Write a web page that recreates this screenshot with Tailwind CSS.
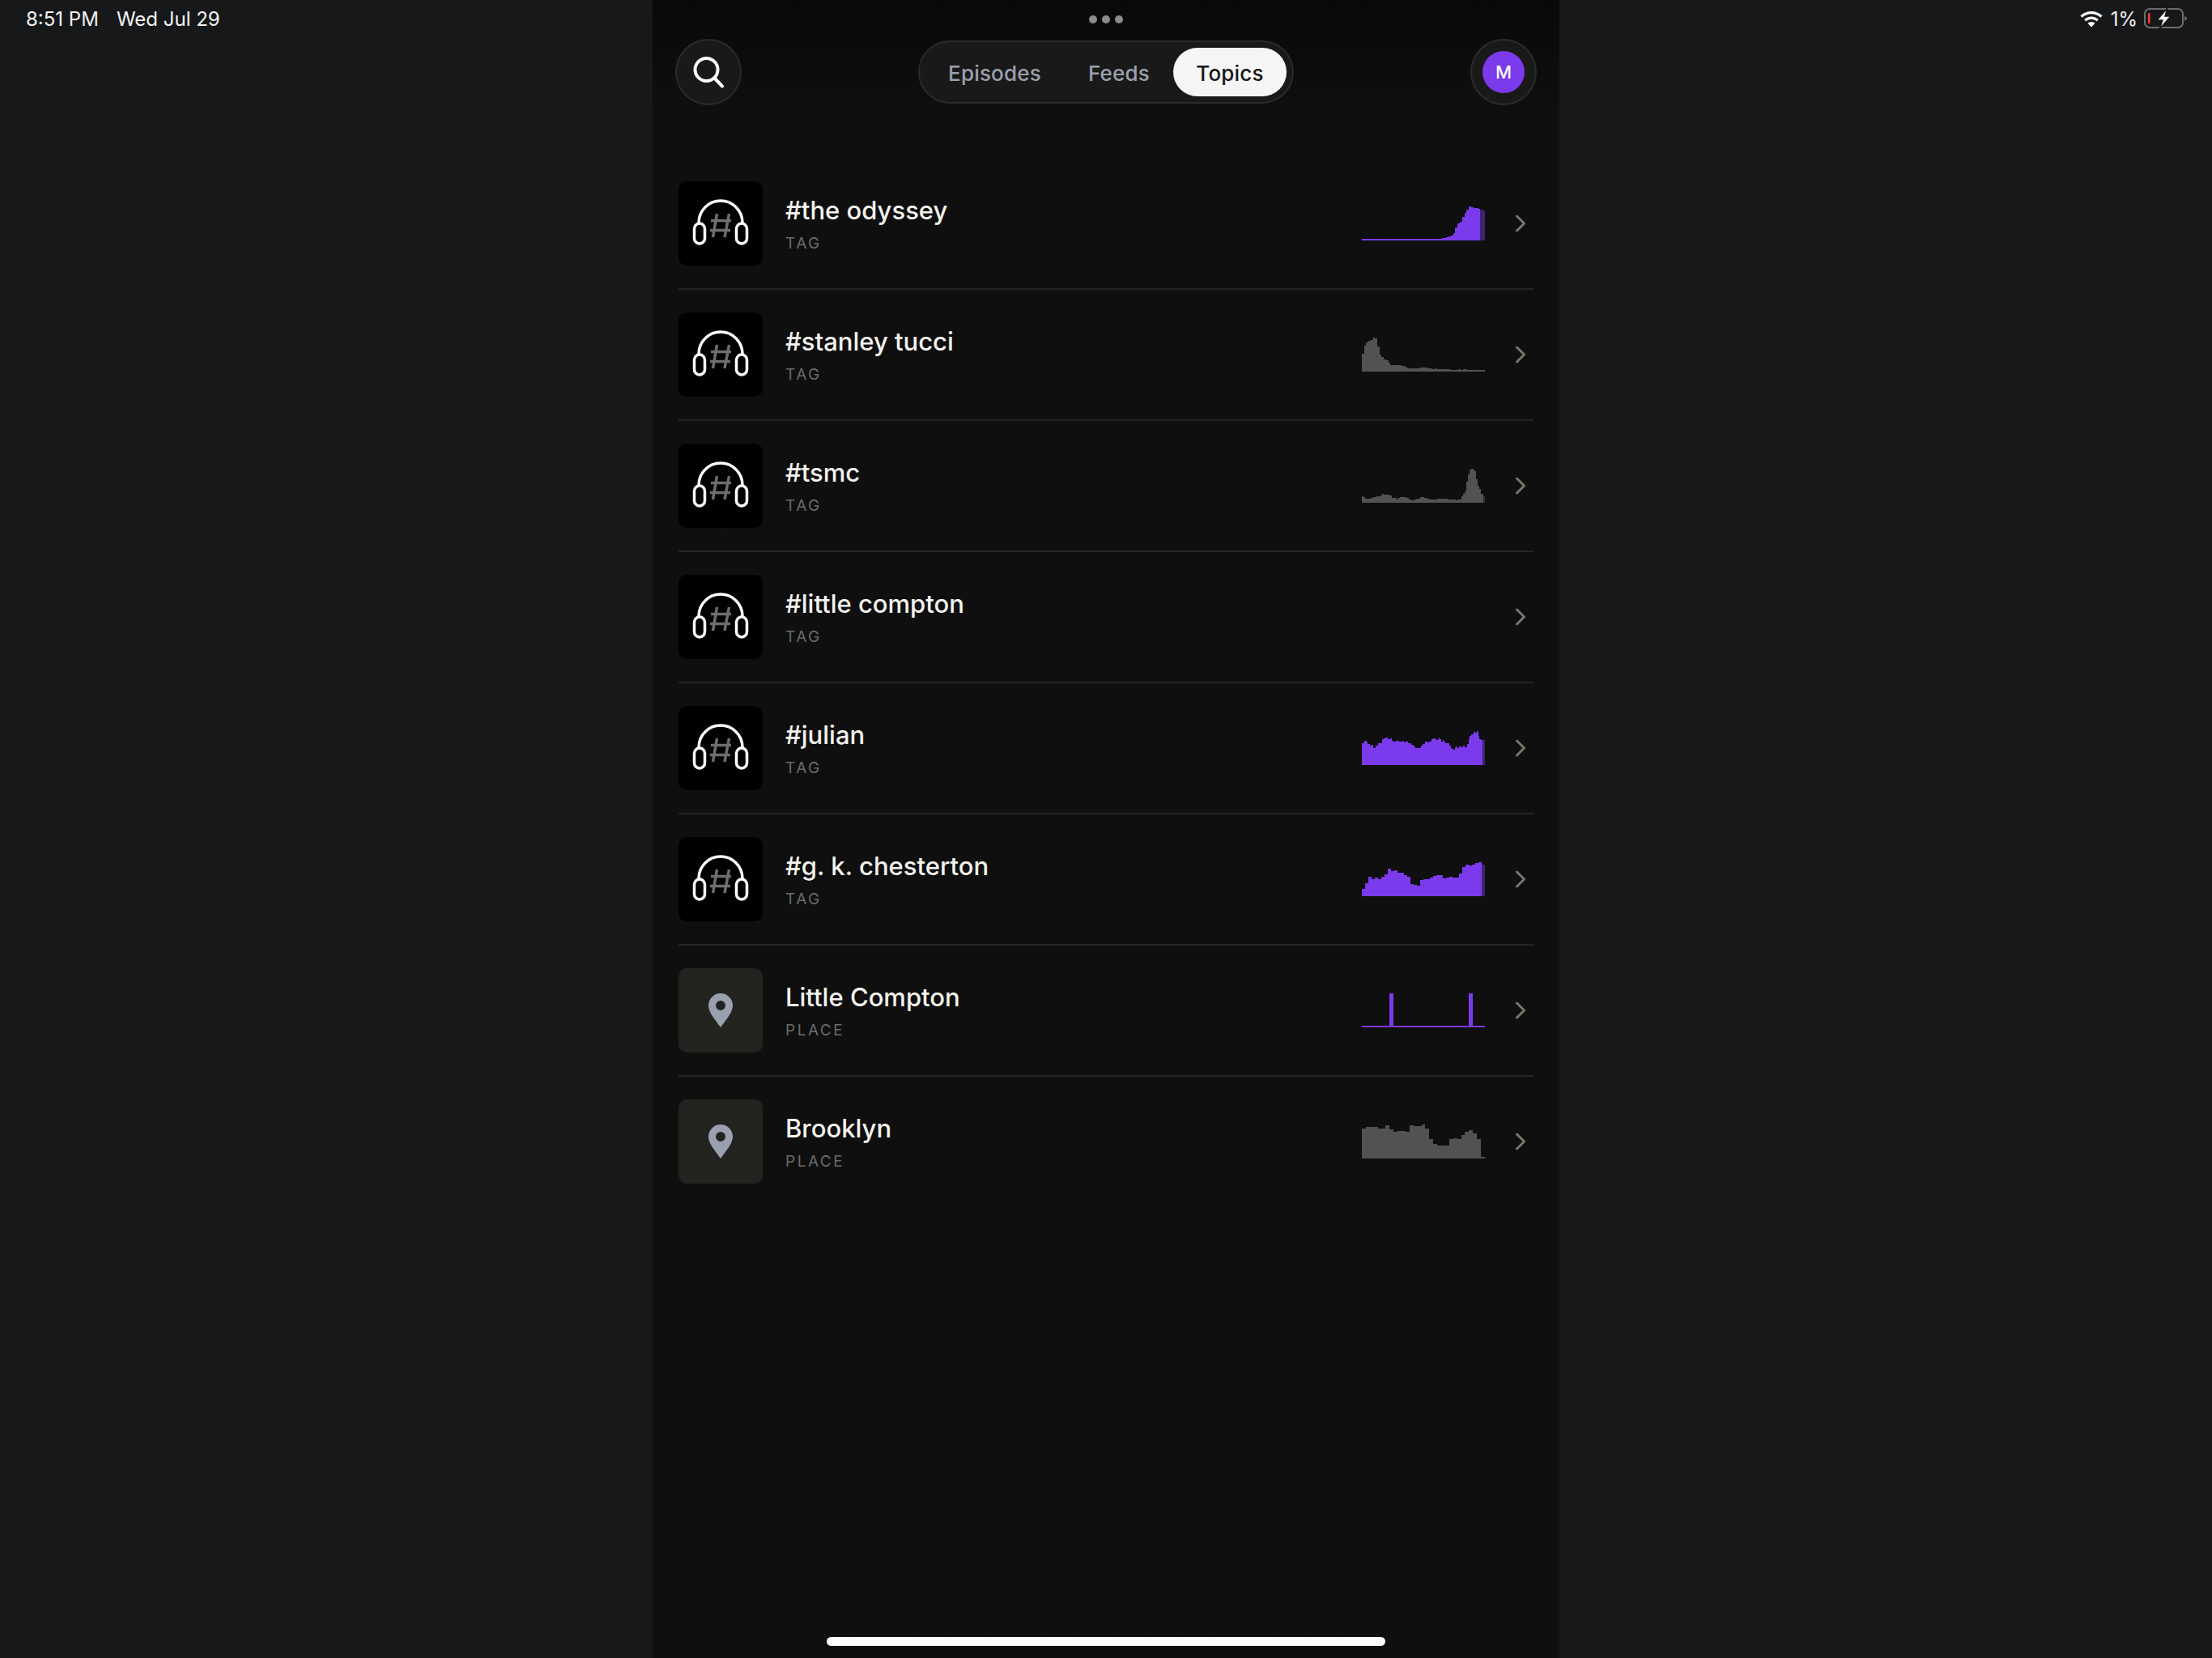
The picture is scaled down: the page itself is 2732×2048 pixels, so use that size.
<!doctype html>
<html lang="en">
	<head>
		<meta charset="UTF-8">
		<title>Topics</title>
		<script src="https://cdn.jsdelivr.net/npm/@tailwindcss/browser@4"></script>
	</head>
	<body class="bg-[#16181a] font-['Inter',sans-serif] overflow-hidden">
		<div class="flex h-[2048px] w-[2732px]">
			<!-- left side: clock -->
			<div class="w-[806px] pl-[32px] pt-[9px] text-[24px] leading-[29px] text-[#f2f2f2] flex gap-[22px]">
				<span>8:51 PM</span>
				<span>Wed Jul 29</span>
			</div>

			<!-- middle column -->
			<div class="w-[1120px] relative bg-[#0e0f0e] bg-gradient-to-b from-[#090909] to-[#0e0f0e] to-[140px] flex flex-col">
				<div class="flex justify-center gap-[6px] pt-[19px]">
					<div class="size-[10px] rounded-full bg-[#8c8c8c]"></div>
					<div class="size-[10px] rounded-full bg-[#8c8c8c]"></div>
					<div class="size-[10px] rounded-full bg-[#8c8c8c]"></div>
				</div>

				<!-- header -->
				<div class="flex justify-between items-center px-[28px] mt-[19px]">
					<div class="size-[82px] rounded-full bg-[#191919] border-2 border-[#2b2b2b] flex items-center justify-center">
						<svg class="size-[82px] shrink-0" viewBox="0 0 82 82" fill="none" stroke="#fff" stroke-width="4" stroke-linecap="round">
							<circle cx="38.500" cy="38" r="14"/>
							<path d="M48.500 48.500l9.500 10"/>
						</svg>
					</div>
					<div class="h-[78px] w-[464px] rounded-full bg-[#191919] border-2 border-[#2b2b2b] flex items-center justify-end pr-[7px] text-[26px] tracking-[0.2px] font-medium">
						<span class="text-[#9ca0ad] mr-[58px] pt-[2px]">Episodes</span>
						<span class="text-[#9ca0ad] mr-[29px] pt-[2px]">Feeds</span>
						<span class="w-[140px] h-[60px] pt-[2px] rounded-full bg-[#f5f5f5] text-[#161616] flex items-center justify-center">Topics</span>
					</div>
					<div class="size-[82px] rounded-full bg-[#191919] border-2 border-[#2b2b2b] flex items-center justify-center">
						<div class="size-[52px] rounded-full bg-[#7c3aed] text-white text-[22px] font-medium flex items-center justify-center">M</div>
					</div>
				</div>

				<!-- list -->
				<div class="px-[32px] mt-[66px]">

					<div class="flex items-center py-[28px] border-b-2 border-[#242422]">
						<div class="size-[104px] rounded-[10px] bg-black shrink-0">
							<svg class="size-[104px]" viewBox="0 0 104 104" fill="none" stroke-width="3.500" stroke-linecap="round">
								<path d="M25 51A27 27 0 0 1 79 51" stroke="#fff"/>
								<rect x="19.500" y="52" width="13" height="25" rx="6.500" stroke="#fff"/>
								<rect x="71.500" y="52" width="13" height="25" rx="6.500" stroke="#fff"/>
								<path d="M47.500 40L42.500 69M62.500 40L57 69M40 48.500H65M39 60.500H64" stroke="#6e6e6e" stroke-linecap="butt"/>
							</svg>
						</div>
						<div class="ml-[28px] flex-1">
							<div class="text-[31px] leading-[40px] font-[550] text-[#f5f3ee]">#the odyssey</div>
							<div class="text-[19px] leading-[24px] mt-[9px] tracking-[2.500px] text-[#6b6b6b]">TAG</div>
						</div>
						<svg class="w-[152px] h-[48px]" viewBox="66 96 456 144" shape-rendering="crispEdges">
							<path fill="#7c3aed" d="M66 231V225H363V222H378V219H387V216H396V213H405V204H411V183H420V168H429V162H438V144H447V129H453V117H462V105H471V108H480V111H498V114H504V231Z"/>
							<path fill="#3f2470" d="M504 231V117H513V120H522V231Z"/>
						</svg>
						<svg class="w-[14px] h-[24px] ml-[36px] mr-[10px]" viewBox="0 0 14 24" fill="none" stroke="#7b766b" stroke-width="3" stroke-linecap="round" stroke-linejoin="round"><path d="M3.500 3l9 9-9 9"/></svg>
					</div>

					<div class="flex items-center py-[28px] border-b-2 border-[#242422]">
						<div class="size-[104px] rounded-[10px] bg-black shrink-0">
							<svg class="size-[104px]" viewBox="0 0 104 104" fill="none" stroke-width="3.500" stroke-linecap="round">
								<path d="M25 51A27 27 0 0 1 79 51" stroke="#fff"/>
								<rect x="19.500" y="52" width="13" height="25" rx="6.500" stroke="#fff"/>
								<rect x="71.500" y="52" width="13" height="25" rx="6.500" stroke="#fff"/>
								<path d="M47.500 40L42.500 69M62.500 40L57 69M40 48.500H65M39 60.500H64" stroke="#6e6e6e" stroke-linecap="butt"/>
							</svg>
						</div>
						<div class="ml-[28px] flex-1">
							<div class="text-[31px] leading-[40px] font-[550] text-[#f5f3ee]">#stanley tucci</div>
							<div class="text-[19px] leading-[24px] mt-[9px] tracking-[2.500px] text-[#6b6b6b]">TAG</div>
						</div>
						<svg class="w-[152px] h-[48px]" viewBox="66 582 456 144" shape-rendering="crispEdges">
							<path fill="#525252" d="M66 717V651H75V621H81V609H90V603H99V600H108V591H114V594H123V624H132V654H138V663H147V672H156V675H165V684H171V693H213V696H228V702H237V705H279V702H309V705H327V708H336V705H342V708H393V711H423V708H432V711H441V708H456V711H522V717Z"/>
						</svg>
						<svg class="w-[14px] h-[24px] ml-[36px] mr-[10px]" viewBox="0 0 14 24" fill="none" stroke="#7b766b" stroke-width="3" stroke-linecap="round" stroke-linejoin="round"><path d="M3.500 3l9 9-9 9"/></svg>
					</div>

					<div class="flex items-center py-[28px] border-b-2 border-[#242422]">
						<div class="size-[104px] rounded-[10px] bg-black shrink-0">
							<svg class="size-[104px]" viewBox="0 0 104 104" fill="none" stroke-width="3.500" stroke-linecap="round">
								<path d="M25 51A27 27 0 0 1 79 51" stroke="#fff"/>
								<rect x="19.500" y="52" width="13" height="25" rx="6.500" stroke="#fff"/>
								<rect x="71.500" y="52" width="13" height="25" rx="6.500" stroke="#fff"/>
								<path d="M47.500 40L42.500 69M62.500 40L57 69M40 48.500H65M39 60.500H64" stroke="#6e6e6e" stroke-linecap="butt"/>
							</svg>
						</div>
						<div class="ml-[28px] flex-1">
							<div class="text-[31px] leading-[40px] font-[550] text-[#f5f3ee]">#tsmc</div>
							<div class="text-[19px] leading-[24px] mt-[9px] tracking-[2.500px] text-[#6b6b6b]">TAG</div>
						</div>
						<svg class="w-[152px] h-[48px]" viewBox="66 1068 456 144" shape-rendering="crispEdges">
							<path fill="#525252" d="M66 1203V1179H72V1182H78V1188H99V1185H108V1182H120V1179H135V1176H141V1170H147V1173H168V1176H177V1185H195V1191H201V1185H207V1182H231V1185H240V1191H249V1194H258V1191H270V1188H282V1182H297V1185H306V1188H318V1191H345V1188H387V1191H414V1194H420V1191H435V1179H441V1170H447V1161H453V1125H459V1098H465V1080H471V1077H477V1080H480V1077H483V1086H489V1116H495V1140H501V1152H507V1170H516V1203Z"/>
							<path fill="#2f2f2f" d="M516 1203V1179H522V1203Z"/>
						</svg>
						<svg class="w-[14px] h-[24px] ml-[36px] mr-[10px]" viewBox="0 0 14 24" fill="none" stroke="#7b766b" stroke-width="3" stroke-linecap="round" stroke-linejoin="round"><path d="M3.500 3l9 9-9 9"/></svg>
					</div>

					<div class="flex items-center py-[28px] border-b-2 border-[#242422]">
						<div class="size-[104px] rounded-[10px] bg-black shrink-0">
							<svg class="size-[104px]" viewBox="0 0 104 104" fill="none" stroke-width="3.500" stroke-linecap="round">
								<path d="M25 51A27 27 0 0 1 79 51" stroke="#fff"/>
								<rect x="19.500" y="52" width="13" height="25" rx="6.500" stroke="#fff"/>
								<rect x="71.500" y="52" width="13" height="25" rx="6.500" stroke="#fff"/>
								<path d="M47.500 40L42.500 69M62.500 40L57 69M40 48.500H65M39 60.500H64" stroke="#6e6e6e" stroke-linecap="butt"/>
							</svg>
						</div>
						<div class="ml-[28px] flex-1">
							<div class="text-[31px] leading-[40px] font-[550] text-[#f5f3ee]">#little compton</div>
							<div class="text-[19px] leading-[24px] mt-[9px] tracking-[2.500px] text-[#6b6b6b]">TAG</div>
						</div>
						<svg class="w-[14px] h-[24px] ml-[36px] mr-[10px]" viewBox="0 0 14 24" fill="none" stroke="#7b766b" stroke-width="3" stroke-linecap="round" stroke-linejoin="round"><path d="M3.500 3l9 9-9 9"/></svg>
					</div>

					<div class="flex items-center py-[28px] border-b-2 border-[#242422]">
						<div class="size-[104px] rounded-[10px] bg-black shrink-0">
							<svg class="size-[104px]" viewBox="0 0 104 104" fill="none" stroke-width="3.500" stroke-linecap="round">
								<path d="M25 51A27 27 0 0 1 79 51" stroke="#fff"/>
								<rect x="19.500" y="52" width="13" height="25" rx="6.500" stroke="#fff"/>
								<rect x="71.500" y="52" width="13" height="25" rx="6.500" stroke="#fff"/>
								<path d="M47.500 40L42.500 69M62.500 40L57 69M40 48.500H65M39 60.500H64" stroke="#6e6e6e" stroke-linecap="butt"/>
							</svg>
						</div>
						<div class="ml-[28px] flex-1">
							<div class="text-[31px] leading-[40px] font-[550] text-[#f5f3ee]">#julian</div>
							<div class="text-[19px] leading-[24px] mt-[9px] tracking-[2.500px] text-[#6b6b6b]">TAG</div>
						</div>
						<svg class="w-[152px] h-[48px]" viewBox="66 90 456 144" shape-rendering="crispEdges">
							<path fill="#7c3aed" d="M66 225V144H75V135H81V138H87V147H96V153H102V150H108V162H117V153H126V144H141V129H147V126H153V123H162V129H171V126H177V135H183V138H192V135H204V138H219V135H222V141H228V138H237V144H249V150H258V156H264V162H285V153H291V147H300V138H309V141H315V138H324V129H330V126H339V132H348V129H351V123H354V129H360V138H366V132H369V138H375V144H390V153H396V162H399V165H405V168H411V159H417V153H420V162H426V156H435V159H441V153H447V159H456V147H462V129H465V117H471V111H480V102H486V105H492V99H498V117H501V129H507V132H513V225Z"/>
							<path fill="#3f2470" d="M513 225V132H522V225Z"/>
						</svg>
						<svg class="w-[14px] h-[24px] ml-[36px] mr-[10px]" viewBox="0 0 14 24" fill="none" stroke="#7b766b" stroke-width="3" stroke-linecap="round" stroke-linejoin="round"><path d="M3.500 3l9 9-9 9"/></svg>
					</div>

					<div class="flex items-center py-[28px] border-b-2 border-[#242422]">
						<div class="size-[104px] rounded-[10px] bg-black shrink-0">
							<svg class="size-[104px]" viewBox="0 0 104 104" fill="none" stroke-width="3.500" stroke-linecap="round">
								<path d="M25 51A27 27 0 0 1 79 51" stroke="#fff"/>
								<rect x="19.500" y="52" width="13" height="25" rx="6.500" stroke="#fff"/>
								<rect x="71.500" y="52" width="13" height="25" rx="6.500" stroke="#fff"/>
								<path d="M47.500 40L42.500 69M62.500 40L57 69M40 48.500H65M39 60.500H64" stroke="#6e6e6e" stroke-linecap="butt"/>
							</svg>
						</div>
						<div class="ml-[28px] flex-1">
							<div class="text-[31px] leading-[40px] font-[550] text-[#f5f3ee]">#g. k. chesterton</div>
							<div class="text-[19px] leading-[24px] mt-[9px] tracking-[2.500px] text-[#6b6b6b]">TAG</div>
						</div>
						<svg class="w-[152px] h-[48px]" viewBox="66 576 456 144" shape-rendering="crispEdges">
							<path fill="#7c3aed" d="M66 711V684H78V663H90V639H102V648H114V642H126V648H138V639H150V630H162V609H174V618H186V615H198V624H222V633H234V639H246V666H258V669H270V672H282V651H294V648H318V642H330V636H342V633H366V645H378V642H390V639H402V642H426V627H438V603H450V594H462V597H474V594H486V588H498V585H510V711Z"/>
							<path fill="#3f2470" d="M510 711V594H522V711Z"/>
						</svg>
						<svg class="w-[14px] h-[24px] ml-[36px] mr-[10px]" viewBox="0 0 14 24" fill="none" stroke="#7b766b" stroke-width="3" stroke-linecap="round" stroke-linejoin="round"><path d="M3.500 3l9 9-9 9"/></svg>
					</div>

					<div class="flex items-center py-[28px] border-b-2 border-[#242422]">
						<div class="size-[104px] rounded-[10px] bg-[#232420] shrink-0">
							<svg class="size-[104px]" viewBox="0 0 104 104">
								<path fill="#9aa0ae" fill-rule="evenodd" d="M52 73C44 62 37 54 37 46a15 15 0 0 1 30 0C67 54 60 62 52 73ZM52 40a6 6 0 1 0 0 12 6 6 0 0 0 0-12Z"/>
							</svg>
						</div>
						<div class="ml-[28px] flex-1">
							<div class="text-[31px] leading-[40px] font-[550] text-[#f5f3ee]">Little Compton</div>
							<div class="text-[19px] leading-[24px] mt-[9px] tracking-[2.500px] text-[#6b6b6b]">PLACE</div>
						</div>
						<svg class="w-[152px] h-[48px]" viewBox="66 102 456 144" shape-rendering="crispEdges">
							<path fill="#7c3aed" d="M66 237V231H168V111H183V231H462V111H477V231H522V237Z"/>
						</svg>
						<svg class="w-[14px] h-[24px] ml-[36px] mr-[10px]" viewBox="0 0 14 24" fill="none" stroke="#7b766b" stroke-width="3" stroke-linecap="round" stroke-linejoin="round"><path d="M3.500 3l9 9-9 9"/></svg>
					</div>

					<div class="flex items-center py-[28px]">
						<div class="size-[104px] rounded-[10px] bg-[#232420] shrink-0">
							<svg class="size-[104px]" viewBox="0 0 104 104">
								<path fill="#9aa0ae" fill-rule="evenodd" d="M52 73C44 62 37 54 37 46a15 15 0 0 1 30 0C67 54 60 62 52 73ZM52 40a6 6 0 1 0 0 12 6 6 0 0 0 0-12Z"/>
							</svg>
						</div>
						<div class="ml-[28px] flex-1">
							<div class="text-[31px] leading-[40px] font-[550] text-[#f5f3ee]">Brooklyn</div>
							<div class="text-[19px] leading-[24px] mt-[9px] tracking-[2.500px] text-[#6b6b6b]">PLACE</div>
						</div>
						<svg class="w-[152px] h-[48px]" viewBox="66 588 456 144" shape-rendering="crispEdges">
							<path fill="#525252" d="M66 723V612H81V606H126V612H153V600H168V615H183V624H198V621H228V624H243V600H258V603H288V597H300V612H315V651H330V669H345V675H390V651H405V648H420V651H435V636H447V624H462V618H477V630H492V651H507V717H522V723Z"/>
						</svg>
						<svg class="w-[14px] h-[24px] ml-[36px] mr-[10px]" viewBox="0 0 14 24" fill="none" stroke="#7b766b" stroke-width="3" stroke-linecap="round" stroke-linejoin="round"><path d="M3.500 3l9 9-9 9"/></svg>
					</div>
				</div>

				<!-- home indicator -->
				<div class="absolute bottom-[15px] left-[215px] w-[690px] h-[11px] rounded-full bg-white"></div>
			</div>

			<!-- right side: status icons -->
			<div class="flex-1 flex justify-end items-start pt-[9px] pr-[30px] text-[24px] leading-[29px] text-[#f2f2f2]">
				<svg class="w-[28px] h-[20px] mt-[5px]" viewBox="0 0 28 20" fill="#fff">
					<path d="M14 0C8.800 0 4 2 .400 5.400l2.300 2.400C5.700 5 9.700 3.300 14 3.300s8.300 1.700 11.300 4.500l2.300-2.400C24 2 19.200 0 14 0Z"/>
					<path d="M14 6.500c-3.400 0-6.500 1.300-8.900 3.500l2.300 2.400c1.800-1.600 4.100-2.600 6.600-2.600s4.800 1 6.600 2.600l2.300-2.400C20.500 7.800 17.400 6.500 14 6.500Z"/>
					<path d="M14 13c-1.700 0-3.300.7-4.500 1.800L14 19.500l4.500-4.700C17.300 13.700 15.700 13 14 13Z"/>
				</svg>
				<span class="ml-[10px]">1%</span>
				<svg class="w-[54px] h-[26px] ml-[8px] mt-[1px]" viewBox="0 0 54 26" fill="none">
					<rect x="1" y="1" width="47" height="23" rx="6" stroke="#6e6e6e" stroke-width="2"/>
					<rect x="5" y="6" width="2.500" height="13" fill="#ff3b30"/>
					<path d="M50 9.500l3 2.500v1.500l-3 2.500Z" fill="#6e6e6e"/>
					<path d="M29 0L16 15H23L19 26L33 10H26L29 0Z" fill="#fff" stroke="#16181a" stroke-width="1.500"/>
				</svg>
			</div>
		</div>
	</body>
</html>
